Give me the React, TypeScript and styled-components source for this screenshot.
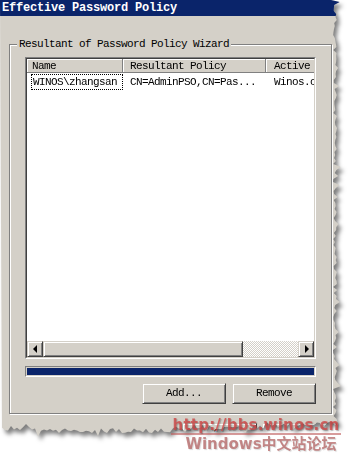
import styled, { createGlobalStyle } from 'styled-components';

const face = '#d4d0c8';
const navy = '#0a246a';
const mono = `'Liberation Mono', 'Courier New', monospace`;

// jagged right and bottom edge of the "torn" screenshot
function tornEdge(): string {
  let seed = 11;
  const rnd = () => {
    seed = (seed * 9301 + 49297) % 233280;
    return seed / 233280;
  };
  const pts: string[] = ['0px 0px', '331px 0px'];
  for (let y = 2; y <= 420; y += 3) {
    const x = 333 + rnd() * 4 + (rnd() > 0.85 ? 4 : 0);
    pts.push(`${x.toFixed(1)}px ${y}px`);
  }
  for (let x = 338; x >= 0; x -= 3) {
    let base = 422;
    if (x < 265) base = 424;
    if (x < 170) base = 428;
    if (x < 30) base = 423;
    const y = base + rnd() * 5 + (rnd() > 0.8 ? 4 : 0);
    pts.push(`${x}px ${y.toFixed(1)}px`);
  }
  return pts.join(', ');
}

const GlobalStyle = createGlobalStyle`
  html, body {
    margin: 0;
    padding: 0;
    background: #fff;
  }
  body {
    width: 353px;
    height: 458px;
    overflow: hidden;
  }
`;

const Page = styled.div`
  position: relative;
  width: 353px;
  height: 458px;
`;

const Shadow = styled.div`
  filter: drop-shadow(3px 4px 2px rgba(0, 0, 0, 0.5));
`;

const Window = styled.div`
  width: 345px;
  height: 452px;
  background: ${face};
  clip-path: polygon(${tornEdge()});
  font-family: ${mono};
  font-size: 11px;
  letter-spacing: -0.6px;
  color: #000;
`;

const TitleBar = styled.div`
  height: 16px;
  background: ${navy};
  color: #fff;
  font: bold 12px ${mono};
  letter-spacing: -0.2px;
  line-height: 16px;
  padding-left: 2px;
  white-space: nowrap;
`;

const Body = styled.div`
  padding: 28px 0 0 9px;
`;

const GroupBox = styled.div`
  position: relative;
  box-sizing: border-box;
  width: 323px;
  border: 1px solid #808080;
  box-shadow: inset 1px 1px #fff, 1px 1px #fff;
  padding: 12px 15px 9px 15px;
`;

const Legend = styled.span`
  position: absolute;
  top: -7px;
  left: 7px;
  padding: 0 2px;
  background: ${face};
  line-height: 13px;
  white-space: nowrap;
`;

const ListFrame = styled.div`
  height: 300px;
  border: 1px solid;
  border-color: #808080 #fff #fff #808080;
`;

const ListInner = styled.div`
  height: 100%;
  box-sizing: border-box;
  display: flex;
  flex-direction: column;
  background: #fff;
  border: 1px solid;
  border-color: #404040 ${face} ${face} #404040;
  overflow: hidden;
`;

const Header = styled.div`
  display: grid;
  grid-template-columns: 96px 143px 80px;
  height: 14px;
  background: ${face};
`;

const HeaderCell = styled.div<{ $pad: number }>`
  border-right: 1px solid #808080;
  border-bottom: 1px solid #808080;
  box-shadow: inset 1px 1px #fff;
  padding-left: ${(p) => p.$pad}px;
  line-height: 14px;
  white-space: nowrap;
  overflow: hidden;
`;

const Rows = styled.div`
  flex: 1;
  padding-top: 1px;
`;

const Row = styled.div`
  display: grid;
  grid-template-columns: 92px 143px 80px;
  height: 16px;
  padding-left: 4px;
`;

const Cell = styled.div<{ $pad: number; $focus?: boolean }>`
  padding-left: ${(p) => p.$pad}px;
  line-height: 14px;
  white-space: nowrap;
  overflow: hidden;
  border: 1px ${(p) => (p.$focus ? 'dotted #000' : 'solid transparent')};
`;

const ScrollBar = styled.div`
  display: flex;
  height: 16px;
`;

const raised = `
  box-sizing: border-box;
  background: ${face};
  border: 1px solid;
  border-color: ${face} #404040 #404040 ${face};
  box-shadow: inset 1px 1px #fff, inset -1px -1px #808080;
`;

const ArrowButton = styled.div`
  ${raised}
  width: 16px;
  display: flex;
  align-items: center;
  justify-content: center;
`;

const Arrow = styled.span<{ $dir: 'left' | 'right' }>`
  width: 0;
  height: 0;
  border-top: 4px solid transparent;
  border-bottom: 4px solid transparent;
  ${(p) =>
    p.$dir === 'left'
      ? 'border-right: 4px solid #000; margin-right: 1px;'
      : 'border-left: 4px solid #000; margin-left: 1px;'}
`;

const Thumb = styled.div`
  ${raised}
  width: 200px;
`;

const Track = styled.div`
  flex: 1;
  background: repeating-conic-gradient(${face} 0 25%, #fff 0 50%) 0 0 / 2px 2px;
`;

const Progress = styled.div`
  margin-top: 7px;
  height: 11px;
  box-sizing: border-box;
  border: 1px solid;
  border-color: #808080 #fff #fff #808080;
  padding: 1px;
`;

const ProgressFill = styled.div`
  height: 100%;
  background: ${navy};
`;

const ButtonRow = styled.div`
  display: flex;
  justify-content: flex-end;
  gap: 6px;
  margin-top: 6px;
`;

const Button = styled.div<{ $w: number }>`
  ${raised}
  width: ${(p) => p.$w}px;
  height: 21px;
  line-height: 19px;
  text-align: center;
`;

const DialogButtons = styled.div`
  display: flex;
  justify-content: flex-end;
  gap: 5px;
  margin-top: 9px;
  padding-right: 8px;
`;

const Watermark = styled.div`
  position: absolute;
  left: 171px;
  top: 417px;
  width: 170px;
  display: flex;
  flex-direction: column;
  align-items: center;
`;

const WmUrl = styled.div`
  width: 100%;
  text-align: center;
  font: bold 15px 'DejaVu Sans', sans-serif;
  letter-spacing: 0.2px;
  line-height: 16px;
  color: rgba(205, 70, 70, 0.8);
  border-bottom: 2px solid rgba(190, 90, 90, 0.6);
  text-shadow: 1px 1px 1px rgba(0, 0, 0, 0.25);
`;

const WmName = styled.div`
  margin-top: 1px;
  padding-left: 10px;
  font: bold 15px 'DejaVu Sans', 'Noto Sans CJK SC', sans-serif;
  line-height: 17px;
  color: rgba(180, 100, 100, 0.75);
  text-shadow: 1px 1px 1px rgba(0, 0, 0, 0.15);
`;

export default function App() {
  return (
    <Page>
      <GlobalStyle />
      <Shadow>
        <Window>
          <TitleBar>Effective Password Policy</TitleBar>
          <Body>
            <GroupBox>
              <Legend>Resultant of Password Policy Wizard</Legend>
              <ListFrame>
                <ListInner>
                  <Header>
                    <HeaderCell $pad={5}>Name</HeaderCell>
                    <HeaderCell $pad={7}>Resultant Policy</HeaderCell>
                    <HeaderCell $pad={8}>Active</HeaderCell>
                  </Header>
                  <Rows>
                    <Row>
                      <Cell $pad={1} $focus>
                        WINOS\zhangsan
                      </Cell>
                      <Cell $pad={6}>CN=AdminPSO,CN=Pas...</Cell>
                      <Cell $pad={7}>Winos.cn</Cell>
                    </Row>
                  </Rows>
                  <ScrollBar>
                    <ArrowButton>
                      <Arrow $dir="left" />
                    </ArrowButton>
                    <Thumb />
                    <Track />
                    <ArrowButton>
                      <Arrow $dir="right" />
                    </ArrowButton>
                  </ScrollBar>
                </ListInner>
              </ListFrame>
              <Progress>
                <ProgressFill />
              </Progress>
              <ButtonRow>
                <Button $w={84}>Add...</Button>
                <Button $w={84}>Remove</Button>
              </ButtonRow>
            </GroupBox>
            <DialogButtons>
              <Button $w={75}>OK</Button>
              <Button $w={75}>Cancel</Button>
            </DialogButtons>
          </Body>
        </Window>
      </Shadow>
      <Watermark>
        <WmUrl>http://bbs.winos.cn</WmUrl>
        <WmName>Windows中文站论坛</WmName>
      </Watermark>
    </Page>
  );
}
